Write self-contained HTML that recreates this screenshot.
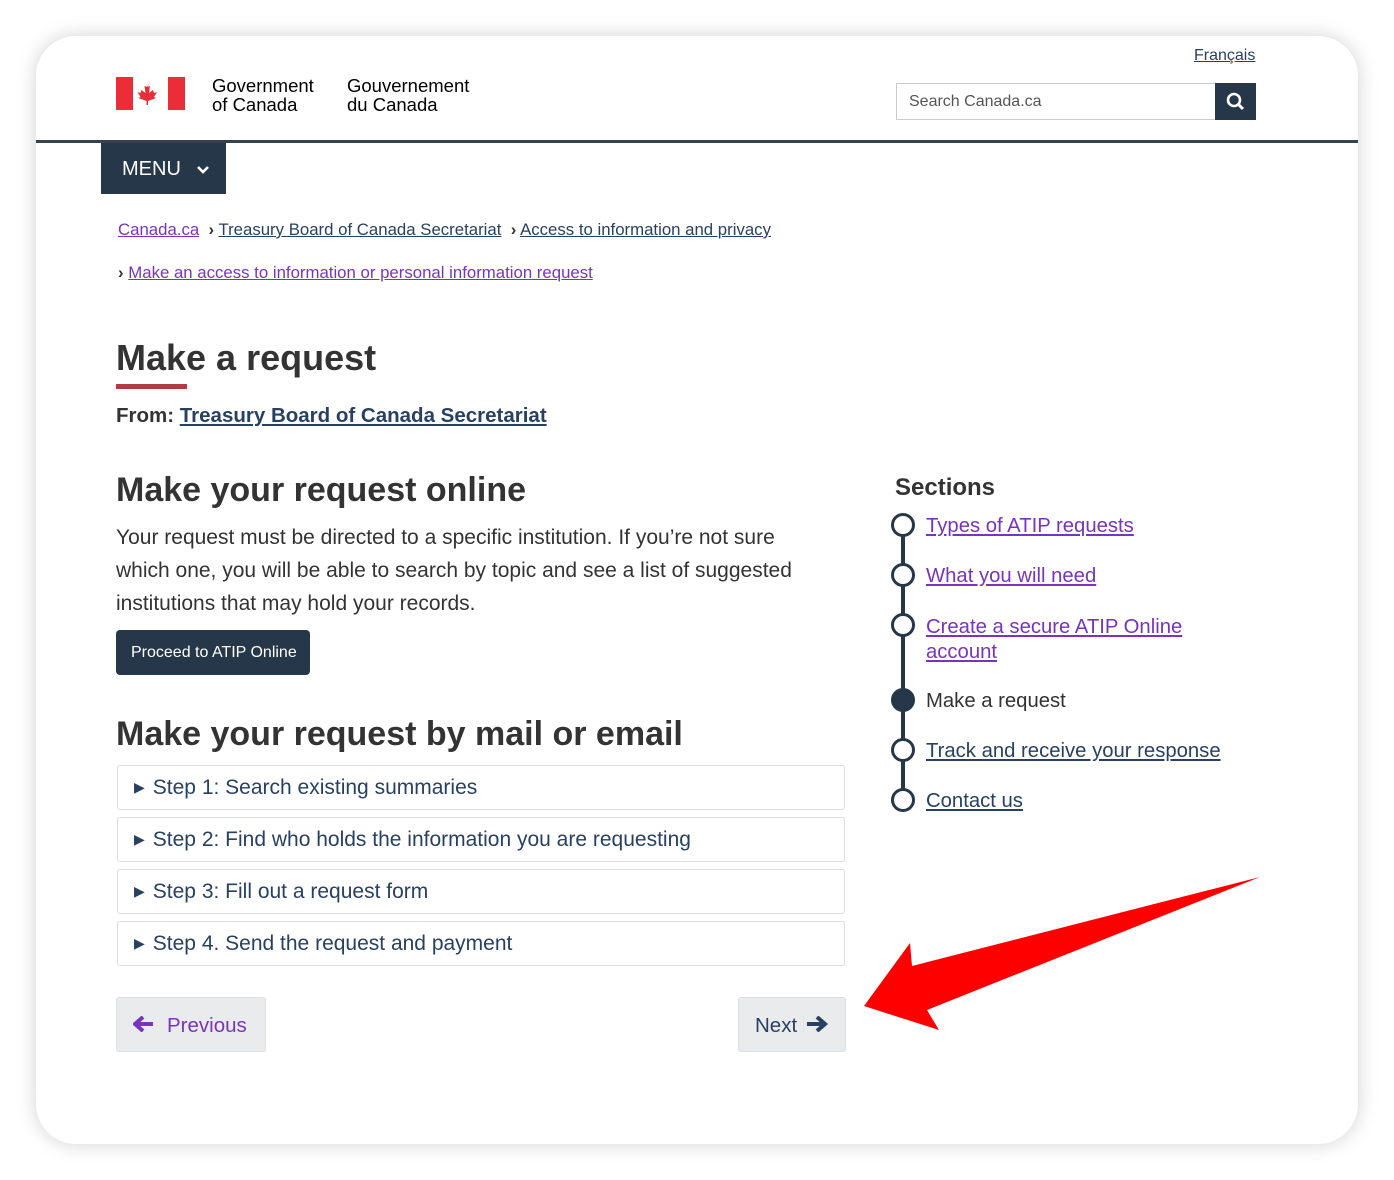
<!DOCTYPE html>
<html><head><meta charset="utf-8"><style>
*{box-sizing:border-box;margin:0;padding:0}
body{width:1394px;height:1180px;background:#fff;font-family:"Liberation Sans",sans-serif;color:#333;position:relative;overflow:hidden}
.card{position:absolute;left:36px;top:36px;width:1322px;height:1108px;background:#fff;border-radius:40px;box-shadow:0 0 20px rgba(0,0,0,.18);overflow:hidden}
.a{position:absolute;white-space:nowrap}
a{color:#284162}
.v{color:#7834bc}
.det{position:absolute;left:117px;width:728px;height:45px;border:1px solid #ddd;border-radius:3px;font-size:21px;color:#284162;padding:10px 0 0 16px;white-space:nowrap}
.det span{font-size:14px;margin-right:8px;position:relative;top:-2px}
.dot{position:absolute;left:891px;width:24px;height:24px;border:3px solid #26374a;border-radius:50%;background:#fff}
.sl{position:absolute;left:926px;font-size:20.3px;white-space:nowrap}
</style></head><body>
<div class="card"></div>
<div class="a" style="left:1194px;top:47px;font-size:16px"><a href="#">Français</a></div>
<svg class="a" style="left:116px;top:77px" width="69" height="33" viewBox="0 0 69 33"><rect width="17" height="33" fill="#eb2d37"/><rect x="52" width="17" height="33" fill="#eb2d37"/><path d="M34.5 4l-3 6-3-1 1 7-4-3-1 3-3-1 3 5-2 1 8 3v4h1.5v-4l8-3-2-1 3-5-3 1-1-3-4 3 1-7-3 1z" fill="#eb2d37"/></svg>
<div class="a" style="left:212px;top:76px;font-size:18.5px;line-height:19px;color:#000">Government<br>of Canada</div>
<div class="a" style="left:347px;top:76px;font-size:18.5px;line-height:19px;color:#000">Gouvernement<br>du Canada</div>
<div class="a" style="left:896px;top:83px;width:320px;height:37px;border:1px solid #ccc;font-size:16px;padding:9px 12px;color:#555">Search Canada.ca</div>
<div class="a" style="left:1215px;top:83px;width:41px;height:37px;background:#26374a"><svg width="41" height="37"><circle cx="19" cy="17" r="6" stroke="#fff" stroke-width="2.6" fill="none"/><path d="M23 21l5 5" stroke="#fff" stroke-width="3"/></svg></div>
<div class="a" style="left:36px;top:140px;width:1322px;height:3px;background:#38414d"></div>
<div class="a" style="left:101px;top:143px;width:125px;height:51px;background:#26374a;color:#fff;font-size:20px;padding:15px 0 0 21px">MENU <svg width="14" height="10" style="margin-left:10px"><path d="M2 2l5 5 5-5" stroke="#fff" stroke-width="2.6" fill="none"/></svg></div>
<div class="a" style="left:118px;top:220px;font-size:16.8px"><a class="v" href="#">Canada.ca</a> &nbsp;<b>›</b> <a href="#">Treasury Board of Canada Secretariat</a> &nbsp;<b>›</b> <a href="#">Access to information and privacy</a></div>
<div class="a" style="left:118px;top:263px;font-size:16.8px"><b>›</b> <a class="v" href="#">Make an access to information or personal information request</a></div>
<div class="a" style="left:116px;top:337px;font-size:36px;font-weight:bold;color:#333">Make a request</div>
<div class="a" style="left:116px;top:384px;width:71px;height:5px;background:#af3c43"></div>
<div class="a" style="left:116px;top:404px;font-size:20.5px;font-weight:bold">From: <a href="#">Treasury Board of Canada Secretariat</a></div>
<div class="a" style="left:116px;top:471px;font-size:34px;font-weight:bold">Make your request online</div>
<div class="a" style="left:116px;top:521px;font-size:21px;line-height:33px">Your request must be directed to a specific institution. If you’re not sure<br>which one, you will be able to search by topic and see a list of suggested<br>institutions that may hold your records.</div>
<div class="a" style="left:116px;top:630px;width:194px;height:45px;background:#26374a;border-radius:4px;color:#fff;font-size:16px;padding:14px 0 0 15px">Proceed to ATIP Online</div>
<div class="a" style="left:116px;top:715px;font-size:34px;font-weight:bold">Make your request by mail or email</div>
<div class="det" style="top:765px"><span>▶</span>Step 1: Search existing summaries</div>
<div class="det" style="top:817px"><span>▶</span>Step 2: Find who holds the information you are requesting</div>
<div class="det" style="top:869px"><span>▶</span>Step 3: Fill out a request form</div>
<div class="det" style="top:921px"><span>▶</span>Step 4. Send the request and payment</div>
<div class="a" style="left:116px;top:997px;width:150px;height:55px;background:#eaebed;border:1px solid #dcdee1;border-radius:3px;font-size:20.5px;color:#7834bc;padding:16px 0 0 16px"><svg width="22" height="16" style="margin-right:12px"><path d="M2 8h18M10 1L2 8l8 7" stroke="#7834bc" stroke-width="4" fill="none"/></svg>Previous</div>
<div class="a" style="left:738px;top:997px;width:108px;height:55px;background:#eaebed;border:1px solid #dcdee1;border-radius:3px;font-size:20.5px;color:#284162;padding:16px 0 0 16px">Next<svg width="22" height="16" style="margin-left:10px"><path d="M0 8h18M10 1l8 7-8 7" stroke="#284162" stroke-width="4" fill="none"/></svg></div>
<div class="a" style="left:895px;top:474px;font-size:24px;font-weight:bold">Sections</div>
<div class="a" style="left:901px;top:525px;width:4px;height:275px;background:#26374a"></div>
<div class="dot" style="top:513px"></div><div class="sl" style="top:515px"><a class="v" href="#">Types of ATIP requests</a></div>
<div class="dot" style="top:563px"></div><div class="sl" style="top:565px"><a class="v" href="#">What you will need</a></div>
<div class="dot" style="top:613px"></div><div class="sl" style="top:615px;line-height:25px"><a class="v" href="#">Create a secure ATIP Online<br>account</a></div>
<div class="dot" style="top:688px;background:#26374a"></div><div class="sl" style="top:690px">Make a request</div>
<div class="dot" style="top:738px"></div><div class="sl" style="top:740px"><a href="#">Track and receive your response</a></div>
<div class="dot" style="top:788px"></div><div class="sl" style="top:790px"><a href="#">Contact us</a></div>
<svg class="a" style="left:0;top:0" width="1394" height="1180"><polygon points="864,1006 910,943 912,966 1260,877 927,1010 939,1030" fill="#f00"/></svg>
</body></html>
